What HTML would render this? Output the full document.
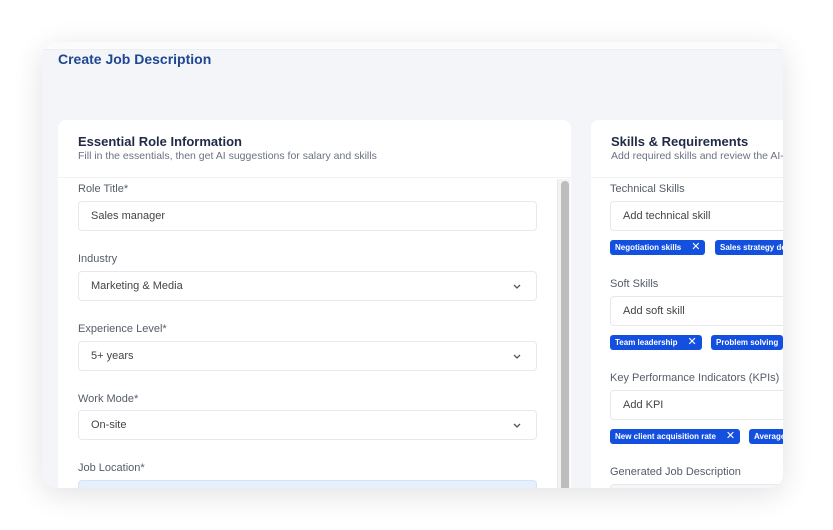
<!DOCTYPE html>
<html><head><meta charset="utf-8"><style>
*{box-sizing:border-box;margin:0;padding:0}
body{width:833px;height:530px;background:#fff;font-family:"Liberation Sans",Arial,sans-serif;position:relative;overflow:hidden}
.frame{position:absolute;left:42px;top:42px;width:741px;height:446px;border-radius:14px;background:#f4f5f8;overflow:hidden;box-shadow:0 6px 30px rgba(0,0,0,.12)}
.topline{position:absolute;left:0;top:0;right:0;height:8px;background:#fafbfc;border-bottom:1px solid #eceef2}
.title{position:absolute;left:16px;top:9px;font-size:14px;font-weight:bold;color:#1d4693}
.card{position:absolute;top:78px;background:#fff;border-radius:8px;height:400px;overflow:hidden}
.c1{left:16px;width:513px}
.c2{left:549px;width:260px}
.hd{position:absolute;left:20px;top:14px}
.hd h2{font-size:13px;font-weight:bold;color:#1f2a44;white-space:nowrap}
.hd p{font-size:10.5px;color:#6b7280;margin-top:1px;white-space:nowrap}
.sep{position:absolute;left:0;right:0;top:57px;height:1px;background:#f0f1f4}
.lbl{position:absolute;font-size:11px;color:#555c68;white-space:nowrap;margin-top:1px}
.inp{position:absolute;height:30px;border:1px solid #e6e8ec;border-radius:4px;background:#fff;font-size:11px;color:#444;padding:8px 12px;white-space:nowrap}
.chev{position:absolute;right:14px;top:9px;width:10px;height:10px}
.sb{position:absolute;left:499px;top:59px;width:13px;height:350px;background:#f3f3f3;border-left:1px solid #e8e8e8}
.thumb{position:absolute;left:3px;top:2px;width:8px;height:345px;background:#bdbdbd;border-radius:4px}
.chip{position:absolute;height:15px;background:#1450e0;color:#fff;font-size:8px;font-weight:bold;border-radius:3px;padding:3px 5px;white-space:nowrap}
.chip span{font-weight:normal;margin-left:10px;font-size:11px;line-height:8px;font-family:"DejaVu Sans",sans-serif;font-weight:200}
</style></head><body>
<div class="frame">
<div class="topline"></div>
<div class="title">Create Job Description</div>

<div class="card c1">
 <div class="hd"><h2>Essential Role Information</h2><p>Fill in the essentials, then get AI suggestions for salary and skills</p></div>
 <div class="sep"></div>
 <div class="lbl" style="left:20px;top:62px">Role Title*</div>
 <div class="inp" style="left:20px;top:81px;width:459px">Sales manager</div>
 <div class="lbl" style="left:20px;top:132px">Industry</div>
 <div class="inp" style="left:20px;top:151px;width:459px">Marketing &amp; Media<svg class="chev" viewBox="0 0 10 10"><path d="M2 4l3 3 3-3" fill="none" stroke="#555" stroke-width="1.3"/></svg></div>
 <div class="lbl" style="left:20px;top:202px">Experience Level*</div>
 <div class="inp" style="left:20px;top:221px;width:459px">5+ years<svg class="chev" viewBox="0 0 10 10"><path d="M2 4l3 3 3-3" fill="none" stroke="#555" stroke-width="1.3"/></svg></div>
 <div class="lbl" style="left:20px;top:272px">Work Mode*</div>
 <div class="inp" style="left:20px;top:290px;width:459px">On-site<svg class="chev" viewBox="0 0 10 10"><path d="M2 4l3 3 3-3" fill="none" stroke="#555" stroke-width="1.3"/></svg></div>
 <div class="lbl" style="left:20px;top:341px">Job Location*</div>
 <div class="inp" style="left:20px;top:360px;width:459px;background:#e6f0fc;border-color:#d6e3f5"></div>
 <div class="sb"><div class="thumb"></div></div>
</div>

<div class="card c2">
 <div class="hd"><h2>Skills &amp; Requirements</h2><p>Add required skills and review the AI-generated suggestions</p></div>
 <div class="sep"></div>
 <div class="lbl" style="left:19px;top:62px">Technical Skills</div>
 <div class="inp" style="left:19px;top:81px;width:260px">Add technical skill</div>
 <div class="chip" style="left:19px;top:120px">Negotiation skills<span>✕</span></div>
 <div class="chip" style="left:124px;top:120px">Sales strategy development</div>
 <div class="lbl" style="left:19px;top:157px">Soft Skills</div>
 <div class="inp" style="left:19px;top:176px;width:260px">Add soft skill</div>
 <div class="chip" style="left:19px;top:215px">Team leadership<span>✕</span></div>
 <div class="chip" style="left:120px;top:215px">Problem solving</div>
 <div class="lbl" style="left:19px;top:251px">Key Performance Indicators (KPIs)</div>
 <div class="inp" style="left:19px;top:270px;width:260px">Add KPI</div>
 <div class="chip" style="left:19px;top:309px">New client acquisition rate<span>✕</span></div>
 <div class="chip" style="left:158px;top:309px">Average deal size</div>
 <div class="lbl" style="left:19px;top:345px">Generated Job Description</div>
 <div class="inp" style="left:19px;top:364px;width:260px;background:#f4f6fa"></div>
</div>
</div>
</body></html>
